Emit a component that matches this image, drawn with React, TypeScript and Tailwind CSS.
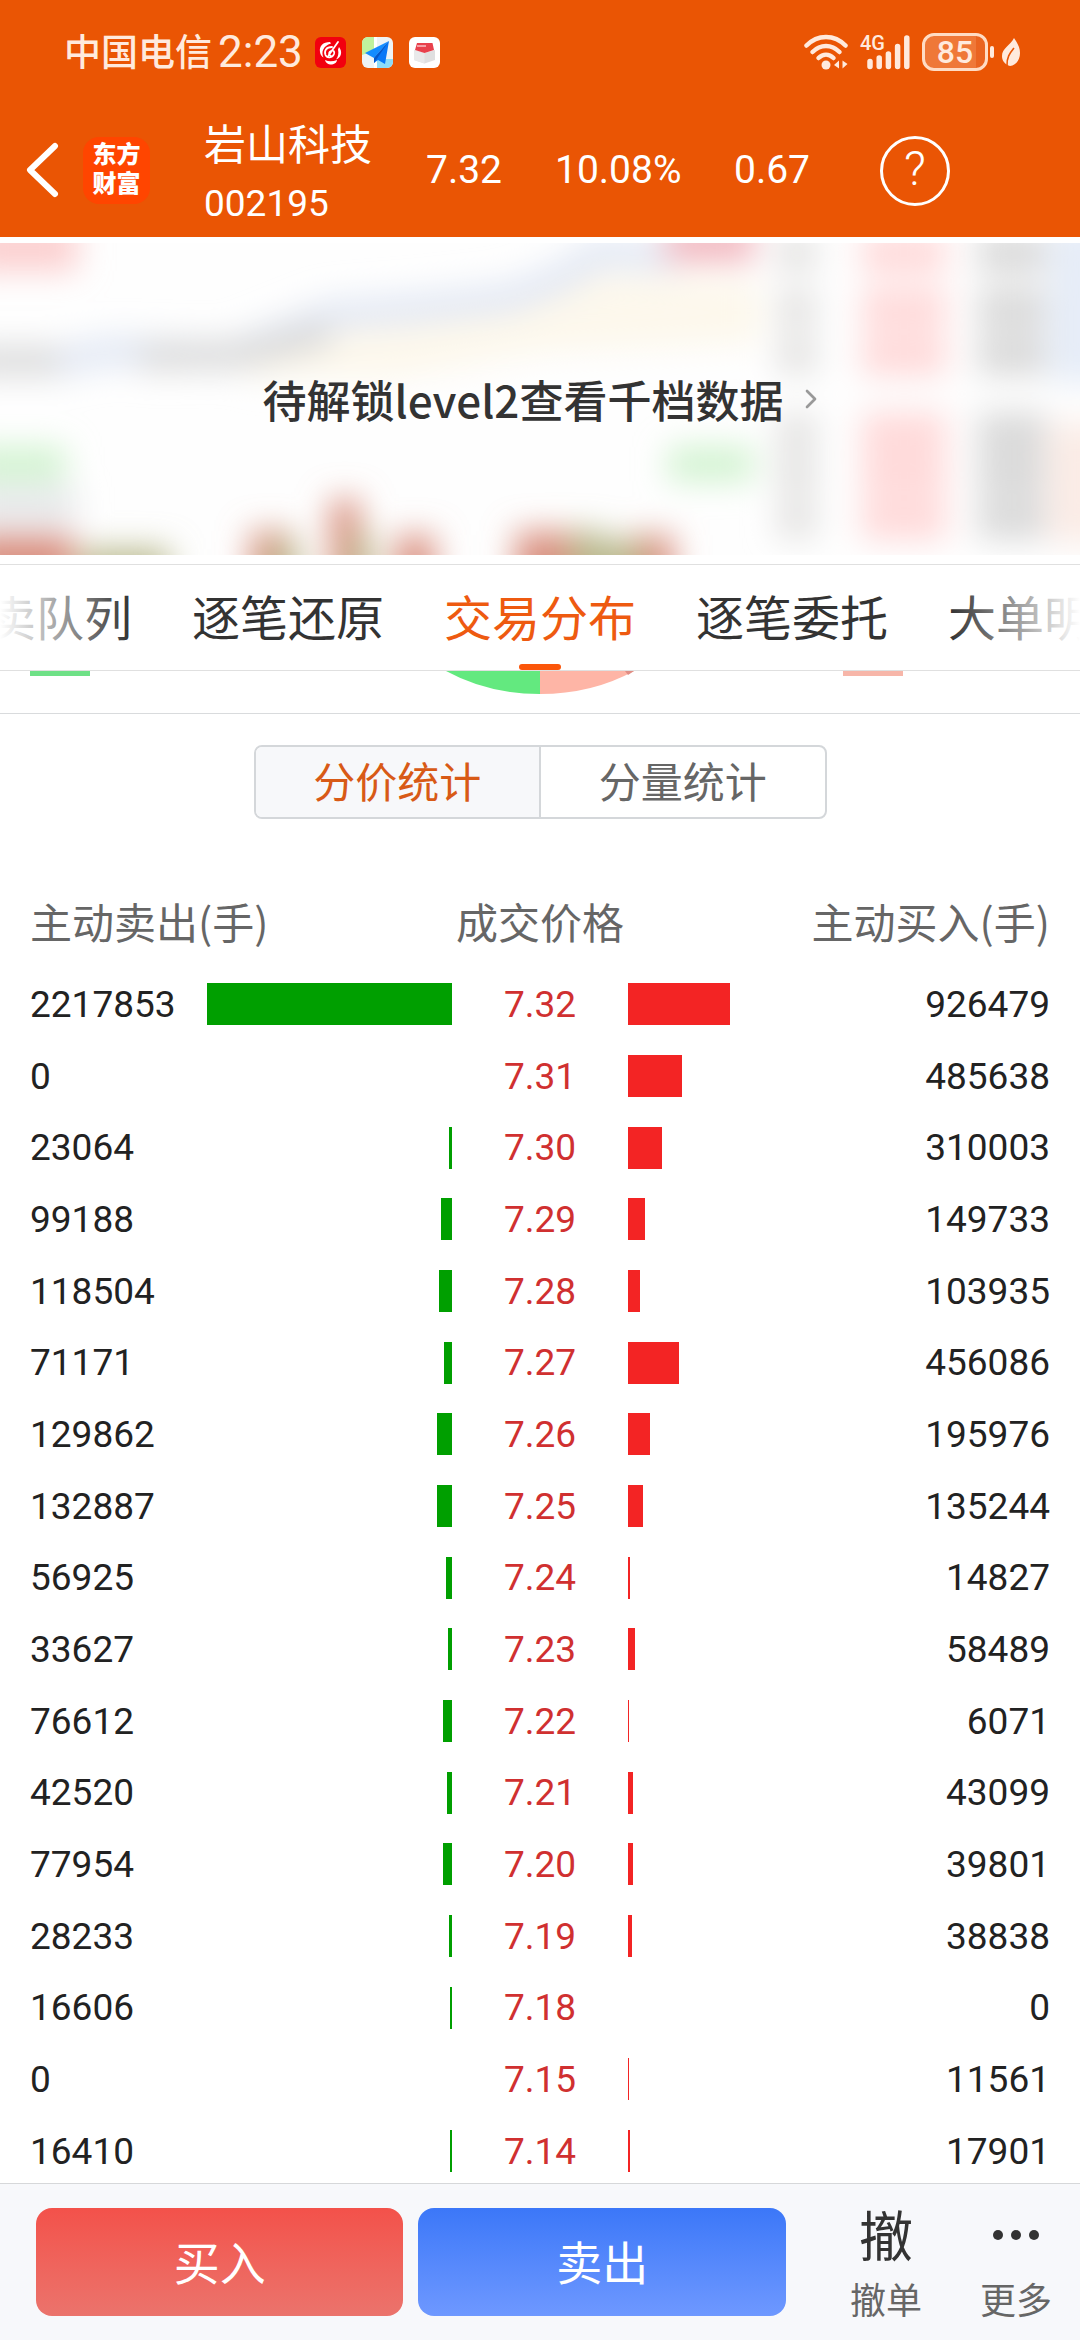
import { ChevronRight } from "lucide-react";

type Row = { sell: number; price: string; buy: number };

const rows: Row[] = [
  { sell: 2217853, price: "7.32", buy: 926479 },
  { sell: 0, price: "7.31", buy: 485638 },
  { sell: 23064, price: "7.30", buy: 310003 },
  { sell: 99188, price: "7.29", buy: 149733 },
  { sell: 118504, price: "7.28", buy: 103935 },
  { sell: 71171, price: "7.27", buy: 456086 },
  { sell: 129862, price: "7.26", buy: 195976 },
  { sell: 132887, price: "7.25", buy: 135244 },
  { sell: 56925, price: "7.24", buy: 14827 },
  { sell: 33627, price: "7.23", buy: 58489 },
  { sell: 76612, price: "7.22", buy: 6071 },
  { sell: 42520, price: "7.21", buy: 43099 },
  { sell: 77954, price: "7.20", buy: 39801 },
  { sell: 28233, price: "7.19", buy: 38838 },
  { sell: 16606, price: "7.18", buy: 0 },
  { sell: 0, price: "7.15", buy: 11561 },
  { sell: 16410, price: "7.14", buy: 17901 },
];

const maxVolume = Math.max(...rows.map((r) => Math.max(r.sell, r.buy)));
const barWidth = (volume: number) => `${(volume / maxVolume) * 100}%`;

const tabs = ["买卖队列", "逐笔还原", "交易分布", "逐笔委托", "大单明细"];
const activeTab = "交易分布";

function NotificationIcons() {
  return (
    <div className="flex gap-4">
      <svg viewBox="0 0 31 31" className="size-[31px]">
        <rect width="31" height="31" rx="6" fill="#f2000f" />
        <path d="M15 5C8 5 4 9 5 15c.3 2.500 1.500 4.500 3.500 5.500C6 15 8 9 16 6.500z" fill="#fff" />
        <path d="M24 10c4 5 2 11-3 12.500 2-2.500 3-6 2-10zM10 23c4 2 8 1.500 12 0 0 3-4 5-7 4.500-2.500-.5-4.500-2-5-4.500z" fill="#fff" />
        <path d="M23 5 13.500 18.500M17 10c-6 0-8 4-6.500 8 1.500 3.500 7 3 8.500-1 1-3-1-4-3-3-3 1.500-2 5 1 5.500" fill="none" stroke="#fff" strokeWidth="1.800" strokeLinecap="round" />
      </svg>
      <svg viewBox="0 0 31 31" className="size-[31px]">
        <defs>
          <clipPath id="map-clip">
            <rect width="31" height="31" rx="6" />
          </clipPath>
        </defs>
        <g clipPath="url(#map-clip)">
          <rect width="31" height="31" fill="#eef3f5" />
          <path d="M0 0h12v14L0 18z" fill="#c0f29d" />
          <path d="M15 22h16v9H15z" fill="#8edcf8" />
          <path d="M12 0h3v31h-3z" fill="#fff" />
          <path d="M27 4 3 16l9 5z" fill="#148cff" />
          <path d="M27 4 12 21v5l4-3 7 4z" fill="#0877f7" />
          <path d="m27 4-15 17v5z" fill="#0757c8" />
        </g>
      </svg>
      <svg viewBox="0 0 31 31" className="size-[31px]">
        <rect width="31" height="31" rx="6" fill="#fff" />
        <path d="m5 13 10.500 3L26 13v10l-10.500 3.500L5 23z" fill="#dfdfe0" />
        <path d="m5 13 10.500 3v10.500L5 23z" fill="#e9e9ea" />
        <path d="M8 6h15.500L25 13l-9.500 3L6 13z" fill="#e8404c" />
        <path d="M8 9h9" stroke="#fff" strokeWidth="1" />
      </svg>
    </div>
  );
}

function SystemIcons() {
  return (
    <div className="flex items-center text-[#ffeadd]">
      <svg viewBox="0 0 44 36" className="h-9 w-11" fill="none" stroke="currentColor" strokeLinecap="round">
        <path d="M2.500 11.500c11-11.500 28-11.500 39 0" strokeWidth="4.500" />
        <path d="M8.500 18c8-8 19-8 27 0" strokeWidth="4.500" />
        <path d="M14.500 24c4.500-4.500 10.500-4.500 15 0" strokeWidth="4.500" />
        <circle cx="22" cy="31" r="4.500" fill="currentColor" stroke="none" />
        <path d="M35 26.500v8l-5-3.500zM38.500 26.500v8l5-4.500z" fill="currentColor" stroke="none" />
      </svg>
      <div className="relative ml-3">
        <svg viewBox="0 0 50 36" className="h-9 w-[50px]" fill="none" stroke="currentColor" strokeWidth="5.500" strokeLinecap="round">
          <path d="M10 27.500v5M19.200 24v8.500M28.400 20v12.500M37.600 12.500v20M46.800 4v28.500" />
        </svg>
        <span className="absolute -top-px left-0 font-['Roboto',sans-serif] text-xl leading-5 font-medium">4G</span>
      </div>
      <div className="ml-3 flex h-[38px] w-[66px] items-center justify-center rounded-xl border-3 border-[#ffdcc4] bg-linear-to-r from-[#ef7838] from-85% to-[#ea6420] to-85% font-['Roboto',sans-serif] text-[32px] leading-8 font-medium">
        85
      </div>
      <div className="ml-0.5 h-3 w-1 rounded-sm bg-[#ffeadd]" />
      <svg viewBox="0 0 18 30" className="ml-2 h-[30px] w-[18px]">
        <path d="M12 1c4 6 6 10 6 15 0 7-4 12-10 13C2 27 0 23 0 19 0 11 8 9 12 1z" fill="currentColor" />
        <path d="M12 11C8 16 4.500 20 5 29" fill="none" stroke="#ea5504" strokeWidth="1.600" />
      </svg>
    </div>
  );
}

function StatusBar() {
  return (
    <div className="flex h-[104px] items-center justify-between pr-[60px] pl-16 text-[#ffeadd]">
      <div className="flex items-center">
        <span className="pb-1 text-[37px] leading-none font-medium">中国电信</span>
        <span className="mr-3 ml-1.5 font-['Roboto',sans-serif] text-[44px] leading-none">2:23</span>
        <NotificationIcons />
      </div>
      <SystemIcons />
    </div>
  );
}

function StockHeader() {
  return (
    <div className="flex h-[133px] items-center pl-6 text-white">
      <button type="button" aria-label="返回" className="w-[38px]">
        <svg viewBox="0 0 38 58" className="h-[58px] w-[38px]" fill="none" stroke="currentColor" strokeWidth="6" strokeLinecap="round" strokeLinejoin="round">
          <path d="M31 4 6 28l25 24" />
        </svg>
      </button>
      <p className="ml-[21px] size-[67px] rounded-2xl bg-[#ff4500] pt-px text-center text-2xl leading-[29px] font-black">
        东方
        <br />
        财富
      </p>
      <div className="ml-[54px] w-[222px] pt-1">
        <h1 className="text-[42px] leading-[58px]">岩山科技</h1>
        <p className="pt-1 font-['Roboto',sans-serif] text-[37px] leading-[58px]">002195</p>
      </div>
      <div className="flex font-['Roboto',sans-serif] text-[39px]">
        <span className="w-[129px]">7.32</span>
        <span className="w-[179px]">10.08%</span>
        <span className="w-[146px]">0.67</span>
      </div>
      <button
        type="button"
        aria-label="帮助"
        className="size-[70px] rounded-full border-3 border-white pb-1 font-['Roboto',sans-serif] text-5xl leading-none font-light"
      >
        ?
      </button>
    </div>
  );
}

function BlurredChart() {
  const quoteRows = [10, 66, 112, 190, 232, 276];
  return (
    <svg viewBox="0 0 1080 312" preserveAspectRatio="none" className="absolute inset-0 size-full" aria-hidden="true">
      <defs>
        <filter id="soft" x="-10%" y="-20%" width="120%" height="140%">
          <feGaussianBlur stdDeviation="16" />
        </filter>
      </defs>
      <rect width="1080" height="312" fill="#fefefe" />
      <g filter="url(#soft)">
        <path d="M240 112 340 75 460 70 590 30 760 40V100L540 110 400 135 250 135z" fill="#fdf8ec" />
        <path d="M-30 118H60L110 108 230 112 330 72 420 65 510 55 560 35 600 10 680 14" fill="none" stroke="#e2e8f4" strokeWidth="30" />
        <path d="M-30 118H60M140 114 240 112 330 90" fill="none" stroke="#dadada" strokeWidth="28" />
        <path d="M-30-20H78V28H-30z" fill="#fccfcf" />
        <path d="M665-20h90V20h-90z" fill="#f2b8c0" />
        <path d="M-30 204H66V238H-30z" fill="#d0f3cf" />
        <path d="M668 204h86v34h-86z" fill="#d0f3cf" />
        <path d="M-30 244H76V280H-30z" fill="#e6e8ea" />
        <path d="M-30 290H74V350H-30zM250 288h42v62h-42zM330 256h30v94h-30zM395 292h40v58h-40zM515 288h62v62h-62zM628 292h46v58h-46z" fill="#da9282" />
        <path d="M80 306h90v44H80zM270 298h28v52h-28zM350 290h22v60h-22zM570 288h36v62h-36zM606 298h36v52h-36z" fill="#b9b98e" />
        {quoteRows.map((y) => (
          <g key={y}>
            <rect x="778" y={y - 19} width="38" height="38" fill="#e3e2e1" />
            <rect x="862" y={y - 20} width="84" height="40" fill="#ffd9d9" />
            <rect x="978" y={y - 20} width="68" height="40" fill="#d9d9d9" />
          </g>
        ))}
        <path d="M1050-20h70V140h-70z" fill="#e6edf8" />
        <path d="M1050 180h70V300h-70z" fill="#fbece6" />
      </g>
    </svg>
  );
}

function UnlockBanner() {
  return (
    <a href="#level2" className="relative mt-1.5 flex h-[312px] items-center justify-center overflow-hidden pl-2.5">
      <BlurredChart />
      <span className="relative text-[44px] font-medium text-[#333333]">待解锁level2查看千档数据</span>
      <ChevronRight className="relative ml-3 size-8 text-[#999999]" strokeWidth={2} />
    </a>
  );
}

function TabBar() {
  return (
    <nav className="relative mt-[9px] flex h-[107px] justify-center gap-[60px] overflow-hidden border-y border-[#e0e0e0]">
      {tabs.map((tab) => (
        <button
          key={tab}
          type="button"
          className={
            tab === activeTab
              ? "relative shrink-0 pb-1.5 text-5xl text-[#ee5a10]"
              : "relative shrink-0 pb-1.5 text-5xl text-[#333333]"
          }
        >
          {tab}
          {tab === activeTab && (
            <span className="absolute bottom-0 left-1/2 h-1.5 w-[42px] -translate-x-1/2 rounded-full bg-[#fb560a]" />
          )}
        </button>
      ))}
      <div className="absolute inset-y-0 left-0 w-[130px] bg-linear-to-r from-white to-transparent" />
      <div className="absolute inset-y-0 right-0 w-[130px] bg-linear-to-l from-white to-transparent" />
    </nav>
  );
}

// Bottom edge of the buy/sell donut, scrolled up under the tab bar.
function DonutEdge() {
  return (
    <div className="flex h-[43px] items-start justify-between border-b border-[#d9dbdd] pr-[177px] pl-[30px]">
      <div className="h-[5px] w-[60px] bg-[#6ee086]" />
      <svg viewBox="0 0 190 24" className="ml-[147px] h-6 w-[190px]">
        <path d="M1 0Q43 23 95 23V0z" fill="#63e97f" />
        <path d="M189 0Q147 23 95 23V0z" fill="#feb5a6" />
        <path d="M180 0h9l-6 4z" fill="#e08d84" />
      </svg>
      <div className="h-[5px] w-[60px] bg-[#f7b6a9]" />
    </div>
  );
}

function StatSwitch() {
  return (
    <div className="mx-auto mt-[31px] flex h-[74px] w-[573px] overflow-hidden rounded-lg border-2 border-[#d4d7da] text-[42px]">
      <button type="button" className="flex-1 border-r-2 border-[#d4d7da] bg-[#f7f8fa] pb-1 leading-none text-[#d85a16]">
        分价统计
      </button>
      <button type="button" className="flex-1 pb-1 leading-none text-[#666666]">
        分量统计
      </button>
    </div>
  );
}

function PriceTable() {
  return (
    <div className="px-[30px] pt-[65px]">
      <table className="w-full table-fixed font-['Roboto','Noto_Sans_CJK_SC',sans-serif] text-[37px] text-[#222222]">
        <colgroup>
          <col className="w-[177px]" />
          <col className="w-[24%]" />
          <col />
          <col className="w-[24%]" />
          <col className="w-[177px]" />
        </colgroup>
        <thead className="font-['Noto_Sans_CJK_SC',sans-serif] text-[42px] text-[#666666]">
          <tr className="h-[84px] align-top whitespace-nowrap">
            <th scope="col" colSpan={2} className="text-left leading-[74px] font-normal">
              主动卖出(手)
            </th>
            <th scope="col" className="leading-[74px] font-normal">
              成交价格
            </th>
            <th scope="col" colSpan={2} className="text-right leading-[74px] font-normal">
              主动买入(手)
            </th>
          </tr>
        </thead>
        <tbody>
          {rows.map((row) => (
            <tr key={row.price} className="h-[72px] nth-[3n]:h-[71px]">
              <td className="leading-none">{row.sell}</td>
              <td>
                <div className="ml-auto h-[42px] bg-[#009f00]" style={{ width: barWidth(row.sell) }} />
              </td>
              <td className="text-center leading-none text-[#d03030]">{row.price}</td>
              <td>
                <div className="h-[42px] bg-[#f32424]" style={{ width: barWidth(row.buy) }} />
              </td>
              <td className="text-right leading-none">{row.buy}</td>
            </tr>
          ))}
        </tbody>
      </table>
    </div>
  );
}

function TradeBar() {
  return (
    <footer className="flex h-[157px] shrink-0 items-start border-t border-[#d6d8da] bg-[#f7f8fb] pt-6 pr-7 pl-9">
      <button type="button" className="h-[108px] flex-1 rounded-2xl bg-linear-to-b from-[#f3514a] to-[#eb736c] pb-1 text-[46px] text-white">
        买入
      </button>
      <button type="button" className="ml-[15px] h-[108px] flex-1 rounded-2xl bg-linear-to-b from-[#3b77f8] to-[#6e98ff] pb-1 text-[46px] text-white">
        卖出
      </button>
      <button type="button" className="ml-16 flex flex-col items-center text-[#333333]">
        <span className="text-[54px] leading-[52px]">撤</span>
        <span className="mt-3 text-4xl leading-[52px] text-[#666666]">撤单</span>
      </button>
      <button type="button" className="ml-[58px] flex flex-col items-center text-[#333333]">
        <svg viewBox="0 0 48 52" className="h-[52px] w-12" fill="currentColor">
          <circle cx="6" cy="27" r="5" />
          <circle cx="24" cy="27" r="5" />
          <circle cx="42" cy="27" r="5" />
        </svg>
        <span className="mt-3 text-4xl leading-[52px] text-[#666666]">更多</span>
      </button>
    </footer>
  );
}

export default function App() {
  return (
    <div className="flex h-screen flex-col bg-white font-['Noto_Sans_CJK_SC',sans-serif]">
      <header className="shrink-0 bg-[#ea5504]">
        <StatusBar />
        <StockHeader />
      </header>
      <main className="min-h-0 flex-1 overflow-y-auto [scrollbar-width:none]">
        <UnlockBanner />
        <TabBar />
        <DonutEdge />
        <StatSwitch />
        <PriceTable />
      </main>
      <TradeBar />
    </div>
  );
}
